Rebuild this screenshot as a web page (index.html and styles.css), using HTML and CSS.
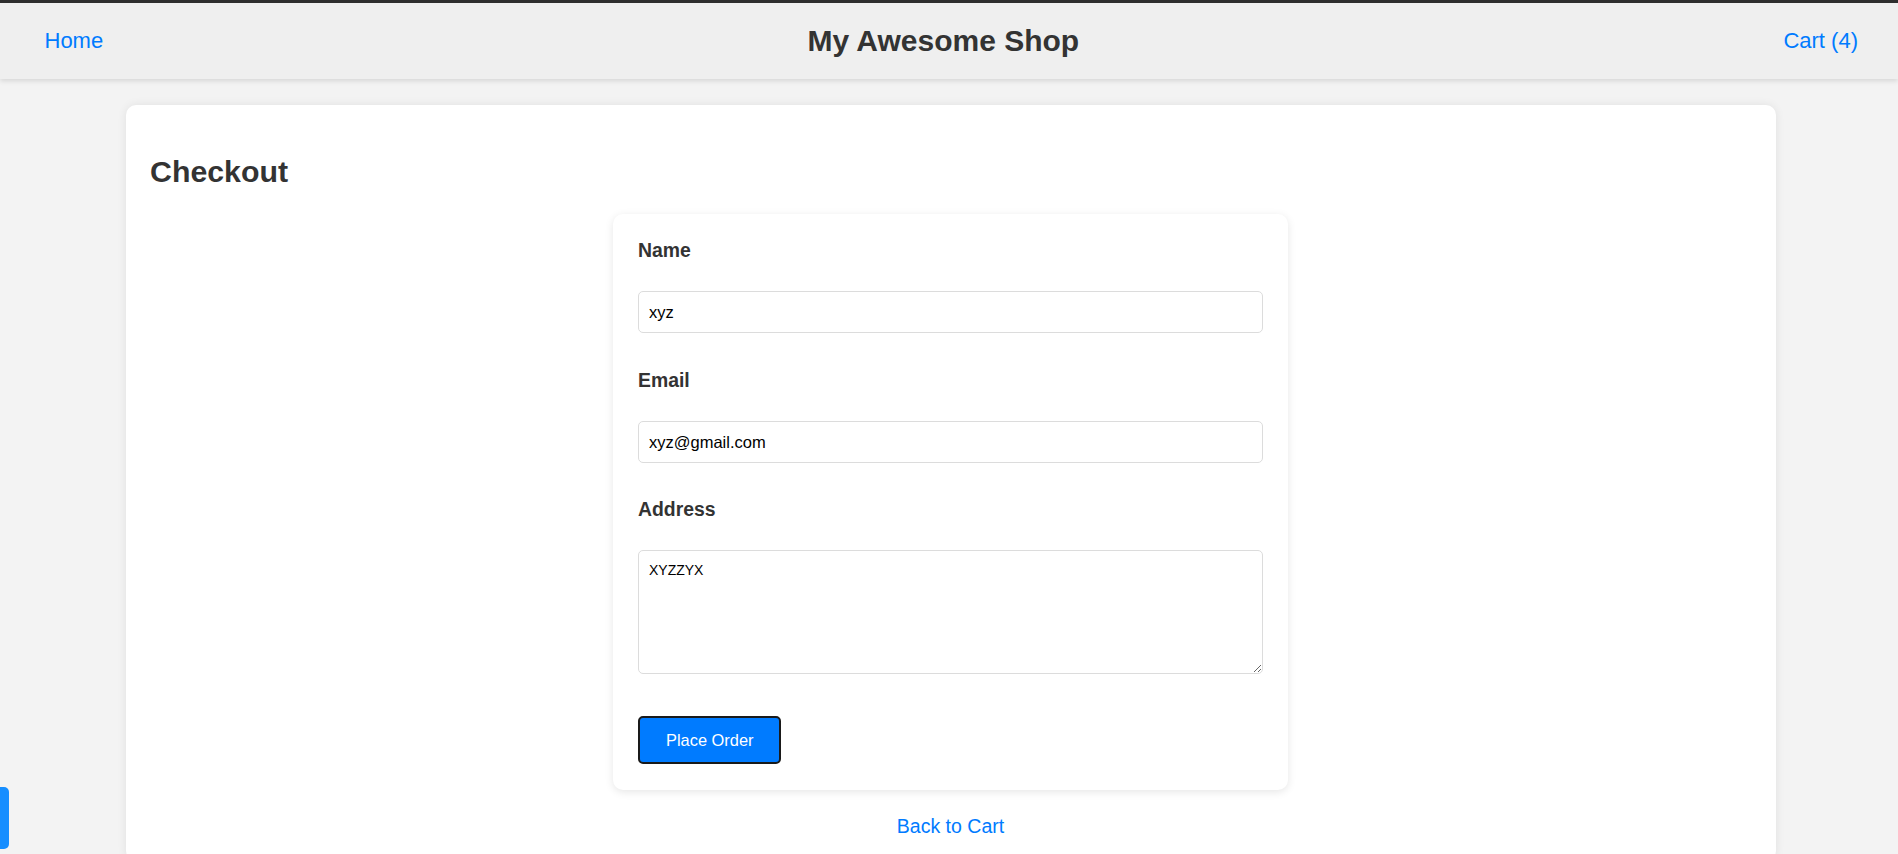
FILE: index.html
```html
<!DOCTYPE html>
<html lang="en">
<head>
<meta charset="utf-8">
<title>Checkout - My Awesome Shop</title>
<link rel="stylesheet" href="styles.css">
</head>
<body>
<header class="site-header">
  <a class="nav-link" href="#">Home</a>
  <h1 class="site-title">My Awesome Shop</h1>
  <a class="nav-link" href="#">Cart (4)</a>
</header>
<main class="main">
  <section class="page-card">
    <h2 class="page-title">Checkout</h2>
    <form class="checkout-form">
      <label class="field-label" for="name">Name</label>
      <input class="field-input" id="name" type="text" value="xyz">
      <label class="field-label" for="email">Email</label>
      <input class="field-input" id="email" type="email" value="xyz@gmail.com">
      <label class="field-label" for="address">Address</label>
      <textarea class="field-textarea" id="address">XYZZYX</textarea>
      <button class="submit-btn" type="button">Place Order</button>
    </form>
    <a class="back-link" href="#">Back to Cart</a>
  </section>
</main>
<div class="side-tab"></div>
</body>
</html>
```
FILE: styles.css
```css
html {
  scrollbar-width: none;
}
html::-webkit-scrollbar {
  display: none;
}
body {
  margin: 0;
  background: #f3f3f3;
  font-family: "Liberation Sans", Arial, sans-serif;
  color: #333;
}
.site-header {
  box-sizing: border-box;
  height: 79px;
  border-top: 3px solid #2e2e2e;
  background: #efefef;
  display: flex;
  align-items: center;
  justify-content: space-between;
  padding: 0 40px 0 44.5px;
  box-shadow: 0 2px 5px rgba(0, 0, 0, 0.12);
  position: relative;
  z-index: 1;
}
.nav-link {
  color: #007bff;
  text-decoration: none;
  font-size: 22px;
}
.site-title {
  margin: 0;
  font-size: 30px;
  font-weight: bold;
  color: #333;
}
.main {
  padding-top: 26px;
}
.page-card {
  box-sizing: border-box;
  width: 1650px;
  margin: 0 0 0 126px;
  background: #fff;
  border-radius: 10px;
  padding: 24px 25px 24px 24px;
  box-shadow: 0 0 10px rgba(0, 0, 0, 0.08);
}
.page-title {
  margin: 26px 0 26px;
  font-size: 30.3px;
  line-height: 33px;
  color: #333;
}
.checkout-form {
  box-sizing: border-box;
  width: 675px;
  margin: 0 auto;
  padding: 25px 25px 26px;
  background: #fff;
  border-radius: 10px;
  box-shadow: 0 2px 8px rgba(0, 0, 0, 0.1);
}
.field-label {
  display: block;
  font-size: 19.4px;
  line-height: 22px;
  font-weight: bold;
  color: #333;
  margin-bottom: 30px;
}
.field-input {
  display: block;
  box-sizing: border-box;
  width: 100%;
  height: 42px;
  margin: 0 0 36px;
  padding: 0 10px;
  border: 1px solid #dcdcdc;
  border-radius: 5px;
  font-family: "Liberation Sans", Arial, sans-serif;
  font-size: 16.5px;
  color: #000;
  background: #fff;
}
.field-input + .field-label + .field-input {
  margin-bottom: 35px;
}
.field-textarea {
  display: block;
  box-sizing: border-box;
  width: 100%;
  height: 124px;
  margin: 3px 0 42px;
  padding: 11px 10px;
  border: 1px solid #dcdcdc;
  border-radius: 5px;
  font-family: "Liberation Sans", Arial, sans-serif;
  font-size: 14px;
  color: #000;
  background: #fff;
}
.submit-btn {
  display: block;
  box-sizing: border-box;
  height: 48px;
  padding: 0 26px;
  border: 2px solid #1a1a1a;
  border-radius: 5px;
  background: #007bff;
  color: #fff;
  font-family: "Liberation Sans", Arial, sans-serif;
  font-size: 16.4px;
}
.back-link {
  display: block;
  margin-top: 25px;
  text-align: center;
  color: #007bff;
  text-decoration: none;
  font-size: 19.5px;
  line-height: 22px;
}
.side-tab {
  position: fixed;
  left: 0;
  top: 787px;
  width: 9px;
  height: 62px;
  background: #168eff;
  border-radius: 0 5px 5px 0;
}
```
